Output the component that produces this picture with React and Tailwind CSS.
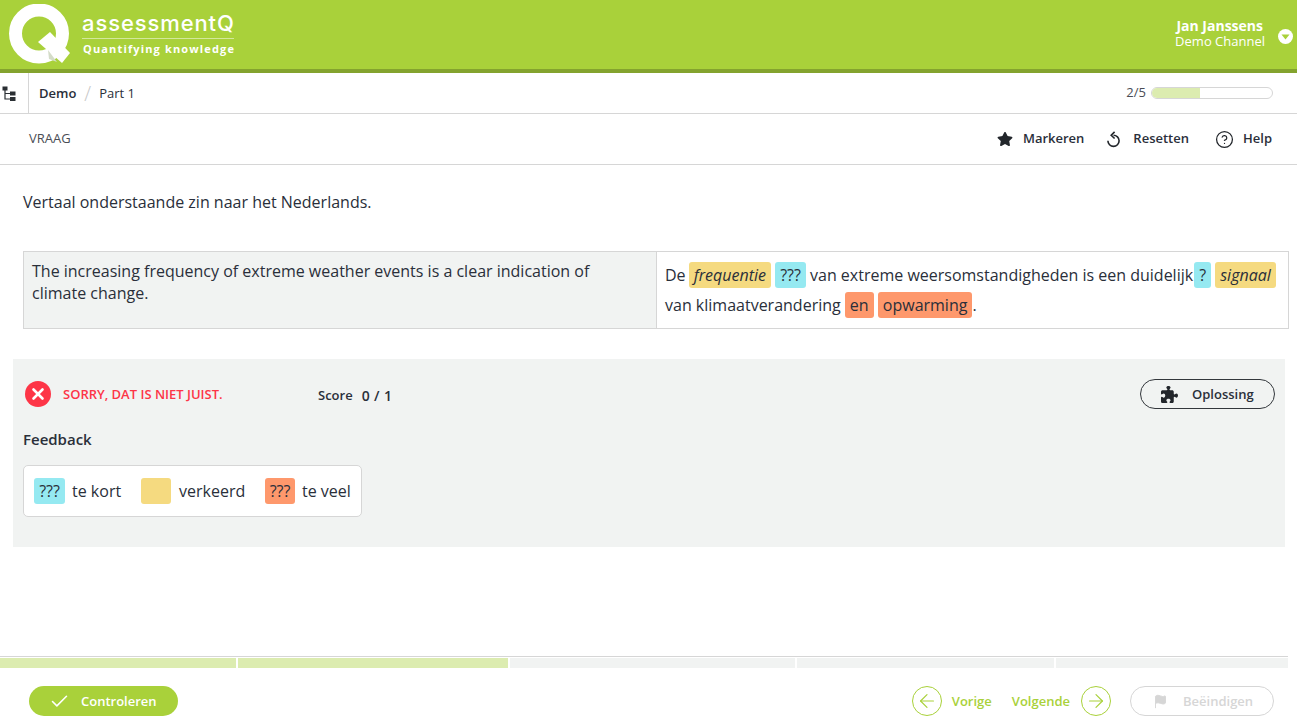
import React from 'react';
import { CircleHelp, Check, ArrowLeft, ArrowRight, Flag, X } from 'lucide-react';
import { FaStar } from 'react-icons/fa';
import { FaPuzzlePiece } from 'react-icons/fa6';

const Logo = () => (
  <div className="flex items-start h-full">
    <svg width="64" height="64" viewBox="0 0 64 64" className="ml-[8px] mt-[4px] shrink-0">
      <circle cx="31" cy="29.5" r="23.5" fill="none" stroke="#fff" strokeWidth="13" />
      <path d="M30 38 L42 28 L62 49 L54 59 Z" fill="#fff" />
      <path d="M40 46 L49 58 L41 55 Z" fill="#d4dcc8" />
    </svg>
    <div className="ml-[10px] mt-[10px] w-[152px] text-white">
      <div className="text-[22px] leading-[27px] tracking-[0.9px] font-['Inter'] font-medium whitespace-nowrap">assessmentQ</div>
      <div className="border-t border-[#d3e89b] mt-[1px] pt-[2px] text-[11px] leading-[15px] font-bold tracking-[1.15px] pl-[1px] whitespace-nowrap">
        Quantifying knowledge
      </div>
    </div>
  </div>
);

const TreeIcon = () => (
  <svg width="14" height="16" viewBox="0 0 14 16" className="text-[#2a2f33]">
    <path d="M3 3v10h6M3 7.5h6" fill="none" stroke="currentColor" strokeWidth="1.2" />
    <rect x="0.5" y="0.5" width="5" height="4" fill="currentColor" />
    <rect x="8" y="5.5" width="5.5" height="4" fill="currentColor" />
    <rect x="8" y="11" width="5.5" height="4" fill="currentColor" />
  </svg>
);

const ResetIcon = () => (
  <svg width="15" height="17" viewBox="0 0 15 17" fill="none" stroke="#22262b" strokeWidth="1.6">
    <path d="M7.5 4.2a5.6 5.6 0 1 1-5.6 5.6" />
    <path d="M8.6 0.9 L5.2 4.2 L8.6 7.5" />
  </svg>
);

const Tag = ({ color, italic, children, className = '' }) => (
  <span className={`inline-block h-[26px] leading-[26px] rounded-[3px] px-[5px] ${color} ${italic ? 'italic' : ''} ${className}`}>
    {children}
  </span>
);

const App = () => {
  const yellow = 'bg-[#f5da80]';
  const cyan = 'bg-[#95e9f1]';
  const orange = 'bg-[#fe986c]';

  return (
    <div className="h-[721px] w-[1297px] flex flex-col overflow-hidden bg-white text-[#2a2f3a] font-['Open_Sans',sans-serif]">
      {/* Header */}
      <header className="h-[73px] shrink-0 bg-[#a9d13a] border-b-4 border-[#84a32e] flex justify-between">
        <Logo />
        <div className="flex items-start text-white pr-[4px] pt-[18px]">
          <div className="text-right mr-[13px]">
            <div className="text-sm leading-[15px] font-bold pr-[2px]">Jan Janssens</div>
            <div className="text-[13px] leading-[15px] mt-[1px]">Demo Channel</div>
          </div>
          <span className="w-[15px] h-[15px] rounded-full bg-white flex items-center justify-center mt-[11px]">
            <svg width="9" height="6" viewBox="0 0 9 6"><path d="M0.5 0.5h8L4.5 5.5z" fill="#a9d13a" /></svg>
          </span>
        </div>
      </header>

      {/* Breadcrumb */}
      <div className="h-[41px] shrink-0 border-b border-[#d6d6d6] flex items-center">
        <div className="w-[29px] h-full border-r border-[#d6d6d6] flex items-center pl-[2px] pt-[1px]">
          <TreeIcon />
        </div>
        <div className="flex items-center pt-[1px]">
          <span className="ml-[10px] text-[13px] font-semibold">Demo</span>
          <span className="mx-[8px] text-[#c8c8c8] text-[20px] leading-none font-light">/</span>
          <span className="text-[13px]">Part 1</span>
        </div>
        <div className="ml-auto flex items-center pr-[24px]">
          <span className="text-[13px] text-[#4a4d55] mr-[5px]">2/5</span>
          <div className="w-[122px] h-[12px] rounded-full border border-[#d6d6d6] overflow-hidden">
            <div className="w-[40%] h-full bg-[#dcecb0]" />
          </div>
        </div>
      </div>

      {/* Toolbar */}
      <div className="h-[51px] shrink-0 border-b border-[#d6d6d6] flex items-center pl-[29px] pr-[25px]">
        <span className="text-[13px] text-[#4a4d55]">VRAAG</span>
        <div className="ml-auto flex items-center text-[13px] font-semibold">
          <FaStar size={16} className="text-[#22262b]" />
          <span className="ml-[10px] mr-[22px]">Markeren</span>
          <ResetIcon />
          <span className="ml-[12px] mr-[26px]">Resetten</span>
          <CircleHelp size={19} strokeWidth={1.6} className="text-[#22262b]" />
          <span className="ml-[9px]">Help</span>
        </div>
      </div>

      {/* Question */}
      <main className="flex-1 min-h-0">
        <p className="ml-[23px] mt-[26px] text-base leading-[22px]">Vertaal onderstaande zin naar het Nederlands.</p>

        <div className="ml-[23px] mt-[38px] w-[1266px] h-[78px] border border-[#d6d6d6] grid grid-cols-[633px_1fr] text-base">
          <div className="bg-[#f1f3f2] border-r border-[#d6d6d6] pl-[8px] pr-[30px] pt-[8px] leading-[22px]">
            The increasing frequency of extreme weather events is a clear indication of climate change.
          </div>
          <div className="pl-[8px] pt-[8px] leading-[30px] whitespace-nowrap">
            <div className="h-[30px]">
              De <Tag color={yellow} italic className="-ml-px">frequentie</Tag>{' '}
              <Tag color={cyan}>???</Tag>{' '}
              van extreme weersomstandigheden is een duidelijk<Tag color={cyan} className="ml-[1px]">?</Tag>{' '}
              <Tag color={yellow} italic>signaal</Tag>
            </div>
            <div className="h-[30px]">
              van klimaatverandering <Tag color={orange}>en</Tag>{' '}
              <Tag color={orange}>opwarming</Tag>.
            </div>
          </div>
        </div>

        {/* Feedback panel */}
        <section className="ml-[13px] mt-[30px] w-[1272px] h-[188px] bg-[#f1f3f2]">
          <div className="flex items-center h-[70px] pl-[12px] pr-[10px]">
            <span className="w-[26px] h-[26px] rounded-full bg-[#fd3547] flex items-center justify-center">
              <X size={18} strokeWidth={3.5} className="text-white" />
            </span>
            <span className="ml-[12px] mt-[1px] w-[255px] text-[13px] font-semibold text-[#fd3547]">SORRY, DAT IS NIET JUIST.</span>
            <span className="text-[13px] font-semibold mt-[3px]">Score</span>
            <span className="ml-[9px] text-sm font-semibold mt-[3px] tracking-[0.4px]">0 / 1</span>
            <button className="ml-auto w-[135px] h-[30px] rounded-full border border-[#33373c] flex items-center pl-[20px] pt-[1px] text-[13px] font-semibold">
              <FaPuzzlePiece size={17} className="text-[#22262b]" />
              <span className="ml-[14px]">Oplossing</span>
            </button>
          </div>
          <h3 className="pl-[10px] text-[15px] font-semibold leading-[20px]">Feedback</h3>
          <div className="ml-[10px] mt-[16px] w-[339px] h-[52px] bg-white border border-[#d6d6d6] rounded-[5px] flex items-center pl-[10px] text-base">
            <span className={`w-[31px] h-[26px] leading-[26px] text-center rounded-[3px] ${cyan}`}>???</span>
            <span className="ml-[7px] w-[69px]">te kort</span>
            <span className={`w-[30px] h-[26px] rounded-[3px] ${yellow}`} />
            <span className="ml-[8px] w-[86px]">verkeerd</span>
            <span className={`w-[30px] h-[26px] leading-[26px] text-center rounded-[3px] ${orange}`}>???</span>
            <span className="ml-[7px]">te veel</span>
          </div>
        </section>
      </main>

      {/* Progress segments */}
      <div className="h-[12px] shrink-0 w-[1288px] border-t border-[#d6d6d6] pt-[1px] flex gap-[2px]">
        <div className="w-[236px] bg-[#dcecb0]" />
        <div className="w-[270px] bg-[#dcecb0]" />
        <div className="w-[285px] bg-[#f1f3f2]" />
        <div className="w-[257px] bg-[#f1f3f2]" />
        <div className="flex-1 bg-[#f1f3f2]" />
      </div>

      {/* Footer */}
      <footer className="h-[53px] shrink-0 flex items-start pt-[18px] pl-[29px] pr-[23px] text-[13px] font-semibold">
        <button className="w-[149px] h-[30px] rounded-full bg-[#a9d13a] text-white flex items-center pl-[20px]">
          <Check size={21} strokeWidth={1.8} />
          <span className="ml-[11px] mt-[1px]">Controleren</span>
        </button>
        <div className="ml-auto flex items-center text-[#a9d13a]">
          <span className="w-[30px] h-[30px] rounded-full border border-[#a9d13a] flex items-center justify-center">
            <ArrowLeft size={22} strokeWidth={1.3} />
          </span>
          <span className="ml-[10px] mt-[1px]">Vorige</span>
          <span className="ml-[20px] mt-[1px]">Volgende</span>
          <span className="ml-[11px] w-[30px] h-[30px] rounded-full border border-[#a9d13a] flex items-center justify-center">
            <ArrowRight size={22} strokeWidth={1.3} />
          </span>
          <button className="ml-[19px] w-[144px] h-[30px] rounded-full border border-[#d6d6d6] text-[#d6d6d6] flex items-center pl-[22px]">
            <Flag size={15} fill="currentColor" strokeWidth={1.5} />
            <span className="ml-[15px] mt-[1px]">Beëindigen</span>
          </button>
        </div>
      </footer>
    </div>
  );
};

export default App;
